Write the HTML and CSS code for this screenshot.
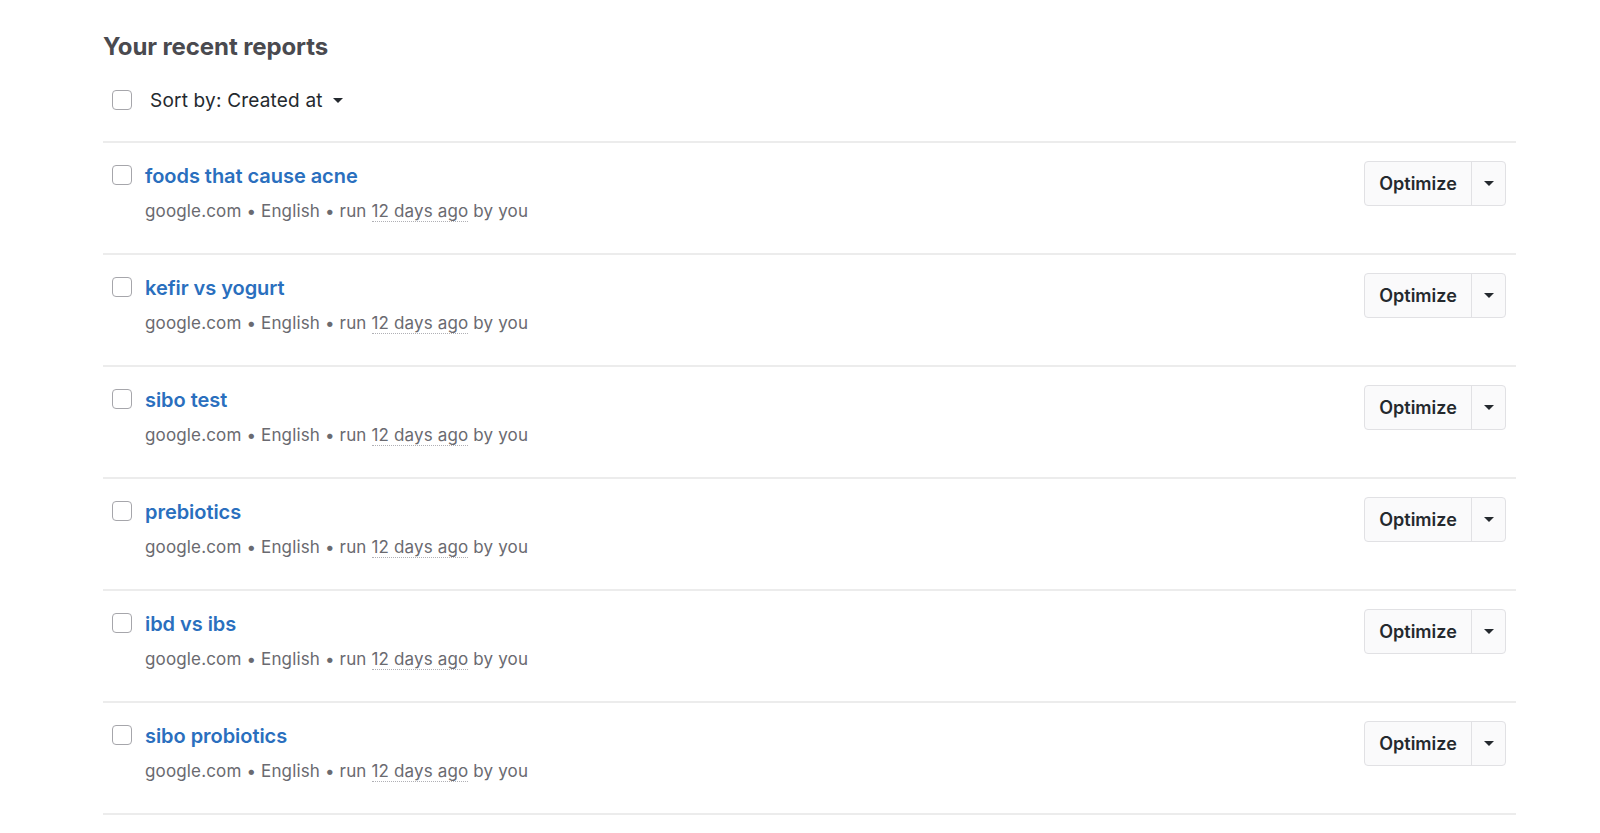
FILE: index.html
```html
<!DOCTYPE html>
<html>
<head>
<meta charset="utf-8">
<link rel="stylesheet" href="styles.css">
</head>
<body>
<main class="page">
  <h2 class="heading">Your recent reports</h2>
  <div class="toolbar">
    <span class="check"></span>
    <button class="sort">Sort by: Created at <span class="caret"></span></button>
  </div>
  <ul class="list">
    <li class="row">
      <span class="check"></span>
      <div class="info">
        <a class="title" href="#">foods that cause acne</a>
        <div class="meta">google.com • English • run <span class="time">12 days ago</span> by you</div>
      </div>
      <div class="split"><button class="btn-main">Optimize</button><button class="btn-drop"><span class="caret dark"></span></button></div>
    </li>
    <li class="row">
      <span class="check"></span>
      <div class="info">
        <a class="title" href="#">kefir vs yogurt</a>
        <div class="meta">google.com • English • run <span class="time">12 days ago</span> by you</div>
      </div>
      <div class="split"><button class="btn-main">Optimize</button><button class="btn-drop"><span class="caret dark"></span></button></div>
    </li>
    <li class="row">
      <span class="check"></span>
      <div class="info">
        <a class="title" href="#">sibo test</a>
        <div class="meta">google.com • English • run <span class="time">12 days ago</span> by you</div>
      </div>
      <div class="split"><button class="btn-main">Optimize</button><button class="btn-drop"><span class="caret dark"></span></button></div>
    </li>
    <li class="row">
      <span class="check"></span>
      <div class="info">
        <a class="title" href="#">prebiotics</a>
        <div class="meta">google.com • English • run <span class="time">12 days ago</span> by you</div>
      </div>
      <div class="split"><button class="btn-main">Optimize</button><button class="btn-drop"><span class="caret dark"></span></button></div>
    </li>
    <li class="row">
      <span class="check"></span>
      <div class="info">
        <a class="title" href="#">ibd vs ibs</a>
        <div class="meta">google.com • English • run <span class="time">12 days ago</span> by you</div>
      </div>
      <div class="split"><button class="btn-main">Optimize</button><button class="btn-drop"><span class="caret dark"></span></button></div>
    </li>
    <li class="row">
      <span class="check"></span>
      <div class="info">
        <a class="title" href="#">sibo probiotics</a>
        <div class="meta">google.com • English • run <span class="time">12 days ago</span> by you</div>
      </div>
      <div class="split"><button class="btn-main">Optimize</button><button class="btn-drop"><span class="caret dark"></span></button></div>
    </li>
  </ul>
</main>
</body>
</html>
```
FILE: styles.css
```css
* { box-sizing: border-box; }
html, body { margin: 0; padding: 0; background: #ffffff; }
body { font-family: Inter, "Noto Sans", sans-serif; color: #24292e; }
.page { width: 1413px; margin-left: 103px; padding-top: 31px; }
.heading { margin: 0; font-size: 24px; font-weight: 700; color: #4a4a4f; line-height: 32px; letter-spacing: -0.1px; }
.toolbar { display: flex; align-items: center; height: 68px; margin-top: 12px; padding: 0 0 16px 9px; border-bottom: 2px solid #ececec; }
.check { display: inline-block; width: 20px; height: 20px; border: 1.5px solid #a6a6ab; border-radius: 4px; background: #fff; flex: none; }
.sort { background: none; border: 0; padding: 0; margin-left: 18px; font: inherit; font-size: 19px; letter-spacing: 0.2px; color: #24292e; display: flex; align-items: center; gap: 10px; cursor: pointer; }
.caret { display: inline-block; width: 0; height: 0; border-left: 5px solid transparent; border-right: 5px solid transparent; border-top: 5px solid #24292e; }
.list { list-style: none; margin: 0; padding: 0; }
.row { display: flex; align-items: flex-start; height: 112px; padding: 18px 10px 0 9px; border-bottom: 2px solid #ececec; }
.row .check { margin-top: 4px; }
.info { margin-left: 13px; flex: 1; padding-top: 1px; }
.title { display: block; color: #2a6fbe; text-decoration: none; font-size: 20px; font-weight: 600; line-height: 28px; letter-spacing: -0.05px; }
.meta { margin-top: 9px; color: #6a6a70; font-size: 17px; line-height: 24px; letter-spacing: 0.15px; }
.time { border-bottom: 1px dotted #b0b0b5; }
.split { display: flex; height: 45px; border: 1px solid #e1e1e4; border-radius: 4px; background: #fafafb; }
.btn-main { width: 107px; border: 0; background: none; font: inherit; font-size: 18px; font-weight: 600; color: #24292e; border-right: 1px solid #e1e1e4; cursor: pointer; }
.btn-drop { width: 33px; border: 0; background: none; display: flex; align-items: center; justify-content: center; cursor: pointer; }
```
